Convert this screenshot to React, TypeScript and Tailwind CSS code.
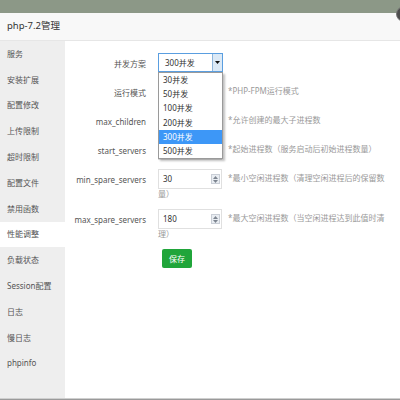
import React from "react";

const FONT = { fontFamily: '"Noto Sans", "Noto Sans CJK SC", sans-serif' };

const menu = [
  "服务",
  "安装扩展",
  "配置修改",
  "上传限制",
  "超时限制",
  "配置文件",
  "禁用函数",
  "性能调整",
  "负载状态",
  "Session配置",
  "日志",
  "慢日志",
  "phpinfo",
];

const options = ["30并发", "50并发", "100并发", "200并发", "300并发", "500并发"];

function Spinner() {
  return (
    <span className="flex flex-col w-[9px] h-[10px] border border-[#c9ced6] bg-[#e9edf2] items-center justify-center gap-[1px]">
      <svg width="5" height="3" viewBox="0 0 5 3">
        <path d="M0 3 L2.5 0 L5 3 Z" fill="#7d8590" />
      </svg>
      <svg width="5" height="3" viewBox="0 0 5 3">
        <path d="M0 0 L2.5 3 L5 0 Z" fill="#7d8590" />
      </svg>
    </span>
  );
}

function NumInput({ value }: { value: string }) {
  return (
    <span className="inline-flex align-middle w-[64px] h-[20px] border border-[#e0e0e0] bg-white items-center pl-[4px] pr-[1px]">
      <span className="flex-1 text-[8px] leading-[10px] text-[#333]">{value}</span>
      <Spinner />
    </span>
  );
}

function Row({
  label,
  children,
  tall,
}: {
  label: string;
  children: React.ReactNode;
  tall?: boolean;
}) {
  return (
    <div
      className={
        tall
          ? "flex items-start h-[30px] mb-[10px] overflow-visible"
          : "flex items-start h-[20px] mb-[9px] overflow-visible"
      }
    >
      <div className="w-[81px] shrink-0 text-right text-[8px] leading-[20px] pt-[1px] text-[#555]">
        {label}
      </div>
      <div className="ml-[12px] w-[231px] text-[8px] leading-[10px] text-[#999]">{children}</div>
    </div>
  );
}

export default function App() {
  return (
    <div
      className="relative w-[400px] h-[400px] overflow-hidden flex flex-col bg-white"
      style={FONT}
    >
      <div className="h-[13px] shrink-0 bg-[#8c9887]" />
      <div className="h-[28px] shrink-0 bg-[#f8f8f8] border-b border-[#e6e6e6] flex items-center pl-[7px]">
        <span className="text-[9.5px] text-[#333]">php-7.2管理</span>
      </div>
      <div className="absolute left-[396px] top-[6px] w-[16px] h-[16px] rounded-full bg-[#4d4d4d] border border-[#777]" />

      <div className="flex flex-1 min-h-0">
        <div className="w-[65px] shrink-0 bg-[#eeeeee] flex flex-col">
          {menu.map((m) => (
            <div
              key={m}
              className={
                m === "性能调整"
                  ? "h-[25.8px] flex items-center pl-[7px] text-[8px] text-[#555] bg-white"
                  : "h-[25.8px] flex items-center pl-[7px] text-[8px] text-[#555]"
              }
            >
              {m}
            </div>
          ))}
        </div>

        <div className="flex-1 bg-white pt-[12px]">
          {/* Row 1 */}
          <div className="flex items-start h-[19px] mb-[10px]">
            <div className="w-[81px] shrink-0 text-right text-[8px] leading-[19px] pt-[1px] text-[#555]">
              并发方案
            </div>
            <div className="ml-[12px] relative z-10">
              <div className="flex w-[65px] h-[19px] border border-[#5a9ee0] bg-white">
                <span className="flex-1 pl-[6px] text-[8px] leading-[17px] text-[#333]">300并发</span>
                <span className="w-[10px] border-l border-[#8fb6dc] bg-[#dbe9f6] flex items-center justify-center">
                  <svg width="5" height="3" viewBox="0 0 5 3">
                    <path d="M0 0 L5 0 L2.5 3 Z" fill="#111" />
                  </svg>
                </span>
              </div>
              <div className="absolute left-0 top-[19px] w-[65px] bg-white border border-[#9a9a9a] shadow-[2px_2px_2px_rgba(0,0,0,0.25)] flex flex-col">
                {options.map((o) => (
                  <div
                    key={o}
                    className={
                      o === "300并发"
                        ? "h-[14.2px] flex items-center pl-[4px] text-[8px] text-white bg-[#3d97f7]"
                        : "h-[14.2px] flex items-center pl-[4px] text-[8px] text-[#333]"
                    }
                  >
                    {o}
                  </div>
                ))}
              </div>
            </div>
          </div>

          <Row label="运行模式">
            <span className="inline-flex align-middle w-[64px] h-[20px] border border-[#e0e0e0] bg-white" />
            <span className="ml-[6px]">*PHP-FPM运行模式</span>
          </Row>
          <Row label="max_children">
            <NumInput value="" />
            <span className="ml-[6px]">*允许创建的最大子进程数</span>
          </Row>
          <Row label="start_servers">
            <NumInput value="" />
            <span className="ml-[6px]">*起始进程数（服务启动后初始进程数量）</span>
          </Row>
          <Row label="min_spare_servers" tall>
            <NumInput value="30" />
            <span className="ml-[6px]">*最小空闲进程数（清理空闲进程后的保留数</span>
            <br />
            <span>量）</span>
          </Row>
          <Row label="max_spare_servers" tall>
            <NumInput value="180" />
            <span className="ml-[6px]">*最大空闲进程数（当空闲进程达到此值时清</span>
            <br />
            <span>理）</span>
          </Row>

          <div className="pl-[97px]">
            <button className="w-[30px] h-[19px] bg-[#20a53a] text-white text-[8px] rounded-[2px] flex items-center justify-center">
              保存
            </button>
          </div>
        </div>
      </div>
      <div className="h-[1px] shrink-0 bg-[#cfcfcf]" />
      <div className="h-[1.5px] shrink-0 bg-[#9a9a9a]" />
    </div>
  );
}
